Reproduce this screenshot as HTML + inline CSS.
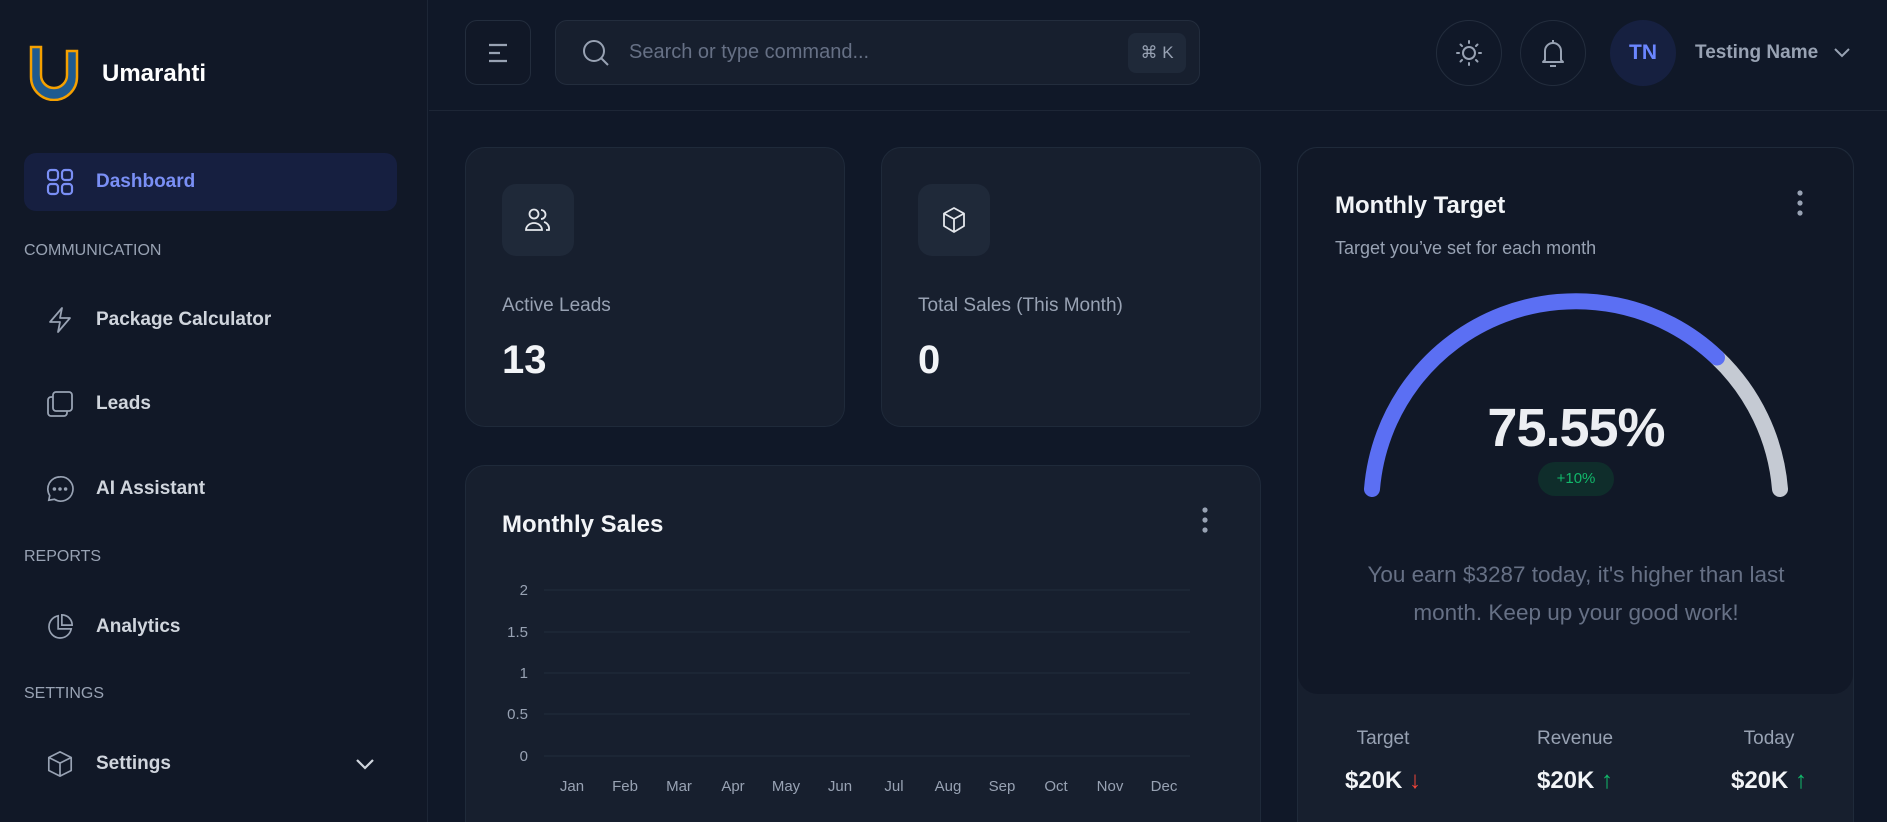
<!DOCTYPE html>
<html><head><meta charset="utf-8"><style>
*{box-sizing:border-box;margin:0;padding:0}
html,body{width:1887px;height:822px;overflow:hidden}
body{background:#101828;font-family:"Liberation Sans",sans-serif;position:relative;color:#e4e7ec}
.abs{position:absolute}
.side{left:0;top:0;width:428px;height:822px;background:#111827;border-right:1px solid #1d2636}
.nav{position:absolute;left:24px;width:373px;height:58px;border-radius:12px;display:flex;align-items:center;padding-left:22px;font-size:19px;font-weight:bold;color:#d0d5dd}
.nav svg{margin-right:22px;flex:none}
.sec{position:absolute;left:24px;font-size:16px;color:#98a2b3;transform:translateY(-50%)}
.card{position:absolute;background:#171f2e;border:1px solid #1f2a3a;border-radius:20px}
.ibox{position:absolute;width:72px;height:72px;border-radius:14px;background:#1f2939;display:flex;align-items:center;justify-content:center}
.circ{position:absolute;width:66px;height:66px;border-radius:50%;border:1px solid #232d3d;display:flex;align-items:center;justify-content:center}
.t{position:absolute;white-space:nowrap}
</style></head><body>
<div class="abs side">
<svg class="abs" style="left:29px;top:45px" width="50" height="56" viewBox="0 0 50 56"><path d="M2 2 H12 V30 A13 13 0 0 0 38 30 V6 H48 V32 A23 23 0 0 1 2 32 Z" fill="#1f5a8f" stroke="#f5a000" stroke-width="2.5"/></svg>
<div class="t" style="left:102px;top:60px;font-size:24px;font-weight:bold;color:#fff">Umarahti</div>
<div class="nav" style="top:153px;background:#161f40;color:#7a8ff5"><svg width="28" height="28" viewBox="0 0 28 28" fill="none" stroke="#7a8ff5" stroke-width="2.2"><rect x="2" y="2" width="10" height="10" rx="3"/><rect x="16" y="2" width="10" height="10" rx="3"/><rect x="2" y="16" width="10" height="10" rx="3"/><rect x="16" y="16" width="10" height="10" rx="3"/></svg>Dashboard</div>
<div class="sec" style="top:251px">COMMUNICATION</div>
<div class="nav" style="top:291px"><svg width="28" height="28" viewBox="0 0 28 28" fill="none" stroke="#98a2b3" stroke-width="1.8" stroke-linejoin="round"><path d="M16 2 L4 16 H14 L12 26 L24 12 H14 Z"/></svg>Package Calculator</div>
<div class="nav" style="top:375px"><svg width="28" height="28" viewBox="0 0 28 28" fill="none" stroke="#98a2b3" stroke-width="1.8"><rect x="7" y="2" width="19" height="19" rx="3"/><path d="M7 7 H5 a3 3 0 0 0 -3 3 V23 a3 3 0 0 0 3 3 H18 a3 3 0 0 0 3 -3 V21"/></svg>Leads</div>
<div class="nav" style="top:460px"><svg width="28" height="28" viewBox="0 0 30 30" fill="none" stroke="#98a2b3" stroke-width="1.8"><path d="M15 2 A13 13 0 1 1 9 26 L3 27 L4 22 A13 13 0 0 1 15 2 Z"/><circle cx="9" cy="15" r="1" fill="#98a2b3"/><circle cx="15" cy="15" r="1" fill="#98a2b3"/><circle cx="21" cy="15" r="1" fill="#98a2b3"/></svg>AI Assistant</div>
<div class="sec" style="top:557px">REPORTS</div>
<div class="nav" style="top:598px"><svg width="28" height="28" viewBox="0 0 30 30" fill="none" stroke="#98a2b3" stroke-width="1.8"><path d="M13 3 A12 12 0 1 0 27 17 H13 Z"/><path d="M17 2 V13 H28 A11 11 0 0 0 17 2 Z"/></svg>Analytics</div>
<div class="sec" style="top:694px">SETTINGS</div>
<div class="nav" style="top:735px"><svg width="28" height="28" viewBox="0 0 30 30" fill="none" stroke="#98a2b3" stroke-width="1.8" stroke-linejoin="round"><path d="M15 2 L27 8 V22 L15 28 L3 22 V8 Z M3 8 L15 14 L27 8 M15 14 V28"/></svg>Settings
<svg class="abs" style="left:330px;top:22px" width="22" height="14" viewBox="0 0 22 14" fill="none" stroke="#d0d5dd" stroke-width="2.2"><path d="M3 3 L11 11 L19 3"/></svg></div>
</div>
<div class="abs" style="left:429px;top:110px;width:1458px;height:1px;background:#1d2636"></div>
<div class="abs" style="left:465px;top:20px;width:66px;height:65px;border:1px solid #232d3d;border-radius:12px;background:#111827"><svg class="abs" style="left:21px;top:21px" width="24" height="22" viewBox="0 0 24 22" stroke="#98a2b3" stroke-width="2.2"><path d="M2 3 H20 M2 11 H13 M2 19 H20"/></svg></div>
<div class="abs" style="left:555px;top:20px;width:645px;height:65px;border:1px solid #232d3d;border-radius:12px;background:#171f2e">
<svg class="abs" style="left:25px;top:17px" width="30" height="30" viewBox="0 0 30 30" fill="none" stroke="#98a2b3" stroke-width="2"><circle cx="13" cy="13" r="10"/><path d="M20.5 20.5 L27 27"/></svg>
<div class="t" style="left:73px;top:20px;font-size:20px;color:#667085">Search or type command...</div>
<div class="abs" style="left:572px;top:12px;width:58px;height:40px;border-radius:8px;background:#1f2939;color:#98a2b3;font-size:17px;text-align:center;line-height:40px">⌘ K</div></div>
<div class="circ" style="left:1436px;top:20px"><svg width="28" height="28" viewBox="0 0 28 28" fill="none" stroke="#98a2b3" stroke-width="2" stroke-linecap="round"><circle cx="14" cy="14" r="6"/><path d="M14 2v2M14 24v2M2 14h2M24 14h2M5.5 5.5l1.5 1.5M21 21l1.5 1.5M5.5 22.5L7 21M21 7l1.5-1.5"/></svg></div>
<div class="circ" style="left:1520px;top:20px"><svg width="28" height="30" viewBox="0 0 28 30" fill="none" stroke="#98a2b3" stroke-width="2" stroke-linejoin="round"><path d="M14 2v3M6 22V13a8 8 0 0 1 16 0v9l2 2H4z M11 28h6"/></svg></div>
<div class="abs" style="left:1610px;top:20px;width:66px;height:66px;border-radius:50%;background:#162040;color:#6b86ff;font-weight:bold;font-size:21px;text-align:center;line-height:66px">TN</div>
<div class="t" style="left:1695px;top:42px;font-size:19px;font-weight:bold;color:#98a2b3">Testing Name</div>
<svg class="abs" style="left:1833px;top:47px" width="18" height="12" viewBox="0 0 18 12" fill="none" stroke="#98a2b3" stroke-width="2"><path d="M2 2 L9 9 L16 2"/></svg>
<div class="card" style="left:465px;top:147px;width:380px;height:280px">
<div class="ibox" style="left:36px;top:36px"><svg width="30" height="30" viewBox="0 0 30 30" fill="none" stroke="#e4e7ec" stroke-width="1.8"><circle cx="11" cy="9" r="4.5"/><path d="M3 25 a8 7 0 0 1 16 0 Z"/><path d="M18 5 a4.5 4.5 0 0 1 0 9 M21 17 a7 7 0 0 1 5 8 h-3"/></svg></div>
<div class="t" style="left:36px;top:147px;font-size:19px;color:#98a2b3">Active Leads</div>
<div class="t" style="left:36px;top:190px;font-size:40px;font-weight:bold;color:#f2f4f7">13</div></div>
<div class="card" style="left:881px;top:147px;width:380px;height:280px">
<div class="ibox" style="left:36px;top:36px"><svg width="30" height="30" viewBox="0 0 30 30" fill="none" stroke="#e4e7ec" stroke-width="1.8" stroke-linejoin="round"><path d="M15 3 L25 8.5 V21 L15 27 L5 21 V8.5 Z M5 8.5 L15 14 L25 8.5 M15 14 V27"/></svg></div>
<div class="t" style="left:36px;top:147px;font-size:19px;color:#98a2b3">Total Sales (This Month)</div>
<div class="t" style="left:36px;top:190px;font-size:40px;font-weight:bold;color:#f2f4f7">0</div></div>
<div class="card" style="left:465px;top:465px;width:796px;height:380px">
<div class="t" style="left:36px;top:45px;font-size:24px;font-weight:bold;color:#f2f4f7">Monthly Sales</div>
<svg class="abs" style="left:734px;top:40px" width="10" height="28"><circle cx="5" cy="4" r="2.6" fill="#98a2b3"/><circle cx="5" cy="14" r="2.6" fill="#98a2b3"/><circle cx="5" cy="24" r="2.6" fill="#98a2b3"/></svg>
</div>
<svg class="abs" style="left:465px;top:560px" width="796" height="262" font-family="Liberation Sans, sans-serif" font-size="15" fill="#98a2b3">
<g stroke="#222c3c" stroke-width="1"><line x1="79" y1="30" x2="725" y2="30"/><line x1="79" y1="72" x2="725" y2="72"/><line x1="79" y1="113" x2="725" y2="113"/><line x1="79" y1="154" x2="725" y2="154"/><line x1="79" y1="196" x2="725" y2="196"/></g>
<g text-anchor="end"><text x="63" y="35">2</text><text x="63" y="77">1.5</text><text x="63" y="118">1</text><text x="63" y="159">0.5</text><text x="63" y="201">0</text></g>
<g text-anchor="middle"><text x="107" y="231">Jan</text><text x="160" y="231">Feb</text><text x="214" y="231">Mar</text><text x="268" y="231">Apr</text><text x="321" y="231">May</text><text x="375" y="231">Jun</text><text x="429" y="231">Jul</text><text x="483" y="231">Aug</text><text x="537" y="231">Sep</text><text x="591" y="231">Oct</text><text x="645" y="231">Nov</text><text x="699" y="231">Dec</text></g>
</svg>
<div class="card" style="left:1297px;top:147px;width:557px;height:700px"></div>
<div class="abs" style="left:1298px;top:148px;width:555px;height:546px;background:#111827;border-radius:20px"></div>
<div class="t" style="left:1335px;top:192px;font-size:24px;font-weight:bold;color:#f2f4f7">Monthly Target</div>
<div class="t" style="left:1335px;top:238px;font-size:18px;color:#98a2b3">Target you’ve set for each month</div>
<svg class="abs" style="left:1795px;top:189px" width="10" height="28"><circle cx="5" cy="4" r="2.6" fill="#98a2b3"/><circle cx="5" cy="14" r="2.6" fill="#98a2b3"/><circle cx="5" cy="24" r="2.6" fill="#98a2b3"/></svg>
<svg class="abs" style="left:0;top:0" width="1887" height="822" fill="none" stroke-width="16" stroke-linecap="round">
<path d="M1717 357.5 A204.7 204.7 0 0 1 1780 489" stroke="#c5cad3"/>
<path d="M1372 489 A204.7 204.7 0 0 1 1717 357.5" stroke="#5b6ff3"/>
</svg>
<div class="t" style="left:1476px;top:397px;width:200px;text-align:center;font-size:54px;font-weight:bold;color:#eceef2;letter-spacing:-1px">75.55%</div>
<div class="abs" style="left:1538px;top:462px;width:76px;height:34px;border-radius:17px;background:#0f2d2b;color:#12b76a;font-size:15px;text-align:center;line-height:34px">+10%</div>
<div class="t" style="left:1351px;top:556px;width:450px;text-align:center;font-size:22.5px;color:#667085;line-height:38px;white-space:normal">You earn $3287 today, it's higher than last month. Keep up your good work!</div>
<div class="t" style="left:1283px;top:728px;width:200px;text-align:center;font-size:19px;color:#98a2b3">Target</div>
<div class="t" style="left:1475px;top:728px;width:200px;text-align:center;font-size:19px;color:#98a2b3">Revenue</div>
<div class="t" style="left:1669px;top:728px;width:200px;text-align:center;font-size:19px;color:#98a2b3">Today</div>
<div class="t" style="left:1283px;top:767px;width:200px;text-align:center;font-size:24px;font-weight:bold;color:#f2f4f7">$20K <span style="color:#f04438;font-weight:normal">↓</span></div>
<div class="t" style="left:1475px;top:767px;width:200px;text-align:center;font-size:24px;font-weight:bold;color:#f2f4f7">$20K <span style="color:#12b76a;font-weight:normal">↑</span></div>
<div class="t" style="left:1669px;top:767px;width:200px;text-align:center;font-size:24px;font-weight:bold;color:#f2f4f7">$20K <span style="color:#12b76a;font-weight:normal">↑</span></div>
</body></html>
